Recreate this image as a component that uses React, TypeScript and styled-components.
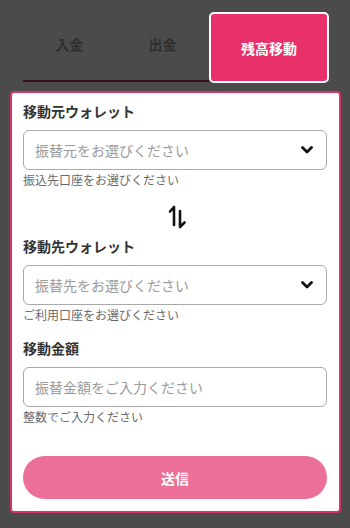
import React from 'react';
import styled, { createGlobalStyle } from 'styled-components';

const GlobalStyle = createGlobalStyle`
    html, body {
        margin: 0;
        padding: 0;
        background: #4b4b4b;
    }
    body {
        font-family: "Noto Sans CJK JP", "Noto Sans", sans-serif;
        color: #333;
    }
`

const Page = styled.div`
    width: 350px;
    height: 528px;
    box-sizing: border-box;
    padding: 12px 9px 0 10px;
`
const Tabs = styled.nav`
    display: grid;
    grid-template-columns: 1fr 1fr 120px;
    height: 71px;
    margin: 0 12px 0 13px;
`
const Tab = styled.div<{ $active?: boolean }>`
    display: flex;
    align-items: center;
    justify-content: center;
    font-size: 14px;
    font-weight: 700;
    box-sizing: border-box;
    color: ${p => (p.$active ? '#fff' : '#2f2f2f')};
    background: ${p => (p.$active ? '#e8306a' : 'transparent')};
    border: ${p => (p.$active ? '2px solid #fff' : 'none')};
    border-radius: ${p => (p.$active ? '5px' : '0')};
    border-bottom: ${p => (p.$active ? '2px solid #fff' : '2px solid #3b0f20')};
    padding-bottom: ${p => (p.$active ? '0' : '4px')};
    height: ${p => (p.$active ? '71px' : '70px')};
`
const Card = styled.main`
    margin-top: 8px;
    background: #fff;
    border: 2px solid #d4336c;
    border-radius: 4px;
    padding: 9px 12px 12px 11px;
    box-sizing: border-box;
    width: 331px;
`
const Label = styled.div`
    font-size: 14px;
    font-weight: 700;
    line-height: 18px;
    color: #333;
`
const Control = styled.div`
    margin-top: 10px;
    height: 40px;
    box-sizing: border-box;
    border: 1px solid #a9a9a9;
    border-radius: 6px;
    display: flex;
    align-items: center;
    justify-content: space-between;
    padding: 0 13px 0 11px;
    font-size: 14px;
    color: #9a9a9a;
`
const Help = styled.div<{ $gap?: number }>`
    margin-top: 2px;
    font-size: 12px;
    line-height: 16px;
    color: #6a6a6a;
    margin-bottom: ${p => p.$gap ?? 0}px;
`
const SwapRow = styled.div`
    display: flex;
    justify-content: center;
    padding: 17px 0 8px;
    margin-left: 4px;
`
const Submit = styled.button`
    display: block;
    width: 100%;
    height: 43px;
    border: none;
    border-radius: 22px;
    background: #ec6f97;
    color: #fff;
    font-family: inherit;
    font-size: 14px;
    font-weight: 700;
`

const Chevron = () => (
    <svg width="12" height="8" viewBox="0 0 12 8">
        <polyline points="1.5,1.5 6,6 10.5,1.5" fill="none" stroke="#111" strokeWidth="2.8" strokeLinecap="round" strokeLinejoin="round" />
    </svg>
)

const SwapIcon = () => (
    <svg width="20" height="24" viewBox="0 0 20 24">
        <g fill="none" stroke="#111" strokeWidth="2.6" strokeLinecap="round" strokeLinejoin="round">
            <path d="M7 2 V20 M7 2 L3 6.5" />
            <path d="M13 6 V22 M13 22 L17.5 17.5" />
        </g>
    </svg>
)

function App(): JSX.Element {
    return (
        <>
            <GlobalStyle />
            <Page>
                <Tabs>
                    <Tab>入金</Tab>
                    <Tab>出金</Tab>
                    <Tab $active>残高移動</Tab>
                </Tabs>
                <Card>
                    <Label>移動元ウォレット</Label>
                    <Control>
                        振替元をお選びください
                        <Chevron />
                    </Control>
                    <Help>振込先口座をお選びください</Help>
                    <SwapRow>
                        <SwapIcon />
                    </SwapRow>
                    <Label>移動先ウォレット</Label>
                    <Control>
                        振替先をお選びください
                        <Chevron />
                    </Control>
                    <Help $gap={16}>ご利用口座をお選びください</Help>
                    <Label>移動金額</Label>
                    <Control>振替金額をご入力ください</Control>
                    <Help $gap={31}>整数でご入力ください</Help>
                    <Submit>送信</Submit>
                </Card>
            </Page>
        </>
    )
}

export default App;
